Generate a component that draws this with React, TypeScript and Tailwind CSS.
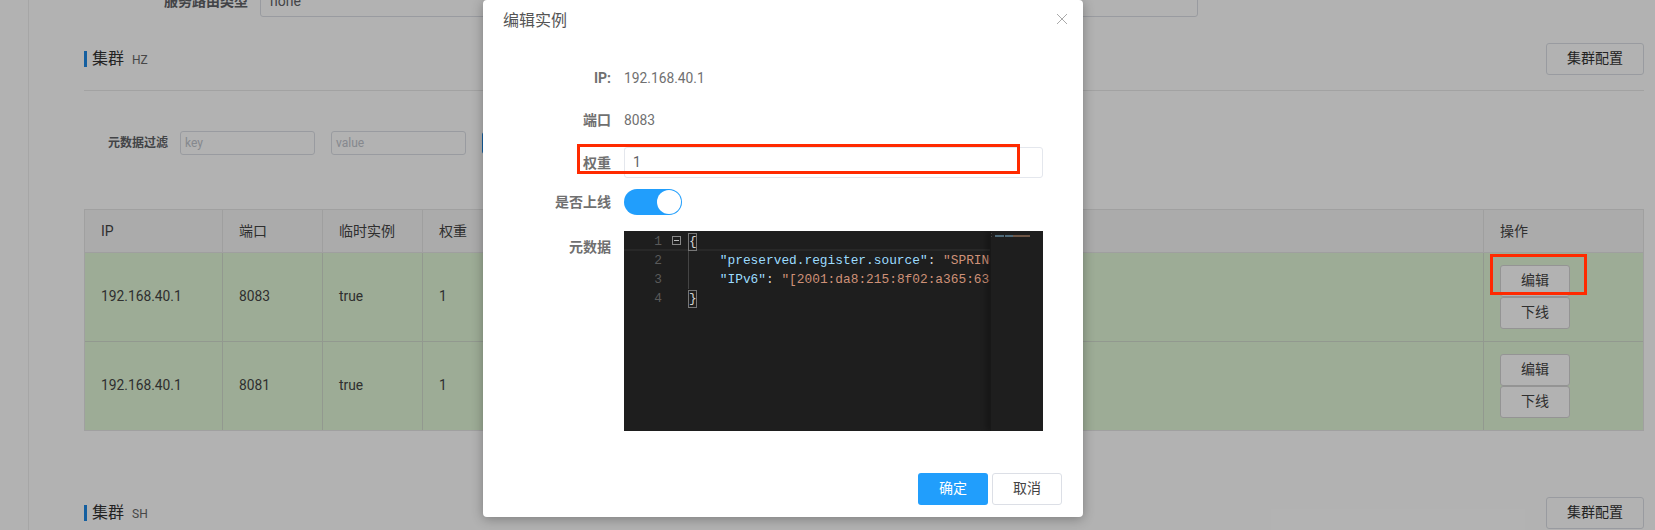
const sans = "font-['Roboto','Noto_Sans_CJK_SC',sans-serif]";

function SectionHeader({ name }: { name: string }) {
  return (
    <div className="flex items-center justify-between">
      <div className="flex items-center">
        <span className="h-[16px] w-[3px] bg-[#1e88e5]" />
        <span className="ml-[5px] text-[16px] leading-[22px] text-[#333]">集群</span>
        <span className="ml-[8px] mt-[2px] text-[12px] leading-[16px] text-[#666]">{name}</span>
      </div>
      <button className="h-[32px] w-[98px] rounded-[3px] border border-[#dcdfe6] bg-white pb-[1px] text-[14px] text-[#333]">集群配置</button>
    </div>
  );
}

function OutlineButton({ children }: { children: string }) {
  return (
    <button className="h-[32px] w-[70px] rounded-[3px] border border-[#d4d4d4] bg-white pb-[2px] text-[14px] text-[#444]">{children}</button>
  );
}

function Row({ port, last }: { port: string; last?: boolean }) {
  return (
    <div className={`grid grid-cols-[137px_100px_100px_1061px_1fr] bg-[#e1f7d7] text-[13.8px] text-[#444] ${last ? "h-[88px]" : "h-[89px] border-b border-[#d2dccd]"}`}>
      <div className="flex items-center pb-[2px] pl-[16px]">192.168.40.1</div>
      <div className="flex items-center border-l border-[#d2dccd] pb-[2px] pl-[16px]">{port}</div>
      <div className="flex items-center border-l border-[#d2dccd] pb-[2px] pl-[16px]">true</div>
      <div className="flex items-center border-l border-[#d2dccd] pb-[2px] pl-[16px]">1</div>
      <div className="flex flex-col items-start justify-center border-l border-[#d2dccd] pl-[16px]">
        <OutlineButton>编辑</OutlineButton>
        <OutlineButton>下线</OutlineButton>
      </div>
    </div>
  );
}

function FormRow({ label, children, className }: { label: string; children: React.ReactNode; className: string }) {
  return (
    <div className={`flex ${className}`}>
      <div className="w-[141px] pr-[13px] text-right text-[14px] font-bold leading-[32px] text-[#707070]">{label}</div>
      <div className="w-[419px]">{children}</div>
    </div>
  );
}

const lines: { n: number; content: React.ReactNode }[] = [
  { n: 1, content: <span className="inline-block h-[18px] w-[9px] border border-[#777] text-[#d4d4d4] leading-[16px]">{"{"}</span> },
  {
    n: 2,
    content: (
      <span className="whitespace-pre">
        {"    "}
        <span className="text-[#9cdcfe]">"preserved.register.source"</span>
        <span className="text-[#d4d4d4]">: </span>
        <span className="text-[#ce9178]">"SPRING_CLOUD"</span>
        <span className="text-[#d4d4d4]">,</span>
      </span>
    ),
  },
  {
    n: 3,
    content: (
      <span className="whitespace-pre">
        {"    "}
        <span className="text-[#9cdcfe]">"IPv6"</span>
        <span className="text-[#d4d4d4]">: </span>
        <span className="text-[#ce9178]">"[2001:da8:215:8f02:a365:634d:1a2b:9c3e]"</span>
      </span>
    ),
  },
  { n: 4, content: <span className="inline-block h-[18px] w-[9px] border border-[#777] text-[#d4d4d4] leading-[16px]">{"}"}</span> },
];

function Editor() {
  return (
    <div className="flex h-[200px] w-[419px] overflow-hidden bg-[#1e1e1e] font-['Liberation_Mono',monospace] text-[12.83px] leading-[19px]">
      <div className="w-[366px] shrink-0 overflow-hidden pt-[1px]">
        {lines.map((l) => (
          <div key={l.n} className={`flex h-[19px] ${l.n === 1 ? "border-b-2 border-[#282828]" : ""}`}>
            <span className="w-[38px] shrink-0 text-right text-[#5a5a5a]">{l.n}</span>
            <span className="flex w-[26px] shrink-0 items-center justify-center pl-[3px]">
              {l.n === 1 && (
                <svg width="9" height="9" viewBox="0 0 9 9">
                  <rect x="0.5" y="0.5" width="8" height="8" fill="none" stroke="#888" />
                  <path d="M2 4.5H7" stroke="#bbb" />
                </svg>
              )}
            </span>
            <span className={`whitespace-pre ${l.n === 2 || l.n === 3 ? "border-l border-[#444]" : ""}`}>{l.content}</span>
          </div>
        ))}
      </div>
      <div className="flex-1 border-l border-[#181818] shadow-[-4px_0_5px_rgba(0,0,0,0.25)]">
        <svg width="52" height="12" viewBox="0 0 52 12">
          <path d="M0 2V3M0 5V6" stroke="#666" />
          <path d="M4 5H13M14 5H22" stroke="#5f8296" strokeWidth="1.5" />
          <path d="M22 5H39" stroke="#8a6a55" strokeWidth="1.5" />
        </svg>
      </div>
    </div>
  );
}

export default function App() {
  return (
    <div className={`relative flex h-[530px] w-[1655px] overflow-hidden bg-white ${sans}`}>
      <div className="h-full w-[29px] shrink-0 border-r border-[#eee]" />
      <div className="w-[1560px] shrink-0 ml-[55px]">
        <div className="-mt-[15px] flex items-center">
          <div className="w-[164px] text-right text-[14px] font-bold text-[#606266]">服务路由类型</div>
          <div className="ml-[12px] flex h-[32px] w-[938px] items-center rounded-[3px] border border-[#dcdfe6] pl-[9px] text-[14px] text-[#606266]">none</div>
        </div>

        <div className="mt-[26px] border-b border-[#e8e8e8] pb-[15px]">
          <SectionHeader name="HZ" />
        </div>

        <div className="mt-[40px] flex h-[24px] items-center">
          <div className="w-[84px] text-right text-[12px] font-bold text-[#606266]">元数据过滤</div>
          <div className="ml-[12px] flex h-[24px] w-[135px] items-center rounded-[3px] border border-[#dcdfe6] pl-[4px] text-[12px] text-[#c0c4cc]">key</div>
          <div className="ml-[16px] flex h-[24px] w-[135px] items-center rounded-[3px] border border-[#dcdfe6] pl-[4px] text-[12px] text-[#c0c4cc]">value</div>
          <div className="ml-[16px] h-[22px] w-[60px] rounded-[3px] bg-[#1e88e5]" />
        </div>

        <div className="mt-[54px] border border-[#e6e6e6]">
          <div className="grid h-[43px] grid-cols-[137px_100px_100px_1061px_1fr] border-b border-[#e4e4e4] bg-[#f5f5f5] text-[14px] text-[#444]">
            <div className="flex items-center pl-[16px]">IP</div>
            <div className="flex items-center border-l border-[#e4e4e4] pl-[16px]">端口</div>
            <div className="flex items-center border-l border-[#e4e4e4] pl-[16px]">临时实例</div>
            <div className="flex items-center border-l border-[#e4e4e4] pl-[16px]">权重</div>
            <div className="flex items-center border-l border-[#e4e4e4] pl-[16px]">操作</div>
          </div>
          <Row port="8083" />
          <Row port="8081" last />
        </div>

        <div className="mt-[66px]">
          <SectionHeader name="SH" />
        </div>
      </div>

      <div className="absolute inset-0 bg-black/30" />

      <div className="absolute left-[483px] top-0 h-[517px] w-[600px] rounded-[4px] bg-white shadow-[0_2px_12px_rgba(0,0,0,0.3)]">
        <div className="relative pl-[20px] pr-[15px] pt-[10px]">
          <span className="block text-[16px] leading-[22px] text-[#555]">编辑实例</span>
          <svg width="12" height="12" viewBox="0 0 12 12" className="absolute right-[15px] top-[13px]">
            <path d="M1 1L11 11M11 1L1 11" stroke="#aaa" strokeWidth="1" />
          </svg>
        </div>
        <FormRow label="IP:" className="mt-[30px]">
          <div className="text-[13.8px] leading-[32px] text-[#707070]">192.168.40.1</div>
        </FormRow>
        <FormRow label="端口" className="mt-[10px]">
          <div className="text-[13.8px] leading-[32px] text-[#707070]">8083</div>
        </FormRow>
        <FormRow label="权重" className="mt-[11px] h-[31px]">
          <div className="flex h-[31px] items-center rounded-[3px] border border-[#e4e7ed] pl-[8px] text-[14px] text-[#606266]">1</div>
        </FormRow>
        <FormRow label="是否上线" className="mt-[11px] h-[26px] items-center">
          <div className="flex h-[26px] w-[58px] items-center justify-end rounded-full bg-[#219efc] pr-[1px]">
            <span className="h-[24px] w-[24px] rounded-full bg-white" />
          </div>
        </FormRow>
        <FormRow label="元数据" className="mt-[16px]">
          <Editor />
        </FormRow>
        <div className="mt-[42px] flex justify-end gap-[4px] pr-[21px]">
          <button className="h-[32px] w-[70px] rounded-[3px] bg-[#219efc] pb-[1px] text-[14px] text-white">确定</button>
          <button className="h-[32px] w-[70px] rounded-[3px] border border-[#dcdfe6] bg-white pb-[1px] text-[14px] text-[#444]">取消</button>
        </div>
      </div>

      <div className="absolute left-[577px] top-[144px] h-[30px] w-[443px] border-[3px] border-[#ff2a00]" />
      <div className="absolute left-[1490px] top-[254px] h-[41px] w-[97px] border-[3px] border-[#ff2a00]" />
    </div>
  );
}
